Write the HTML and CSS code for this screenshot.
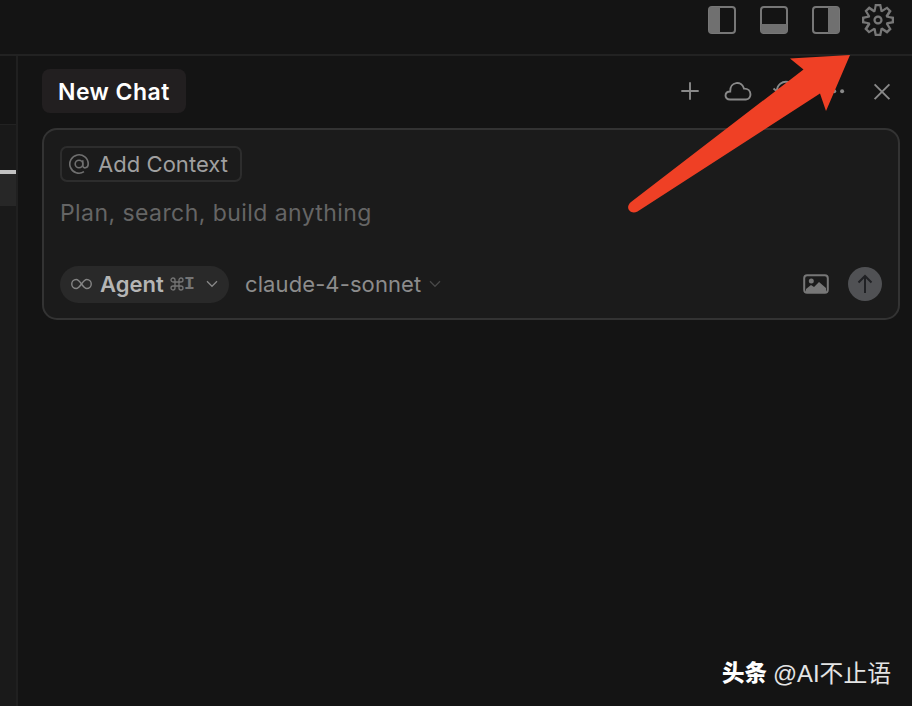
FILE: index.html
```html
<!DOCTYPE html>
<html lang="en">
<head>
<meta charset="utf-8">
<title>New Chat</title>
<link rel="stylesheet" href="styles.css">
</head>
<body>
<div class="app">
  <header class="titlebar">
    <svg class="layout-icon" viewBox="0 0 28 28"><rect x="1" y="1" width="26" height="26" rx="3"/><path class="fill" d="M1 1h11v26H1z"/></svg>
    <svg class="layout-icon" viewBox="0 0 28 28"><rect x="1" y="1" width="26" height="26" rx="3"/><path class="fill" d="M1 18h26v9H1z"/></svg>
    <svg class="layout-icon" viewBox="0 0 28 28"><rect x="1" y="1" width="26" height="26" rx="3"/><path class="fill" d="M16 1h11v26H16z"/></svg>
    <svg class="gear" viewBox="1 1 14 14"><path d="M9.1 4.4L8.6 2H7.4l-.5 2.4-.7.3-2-1.3-.9.8 1.3 2-.2.7-2.4.5v1.2l2.4.5.3.8-1.3 2 .8.8 2-1.3.8.3.4 2.3h1.2l.5-2.4.8-.3 2 1.3.8-.8-1.3-2 .3-.8 2.3-.4V7.4l-2.4-.5-.3-.8 1.3-2-.8-.8-2 1.3-.7-.2zM9.4 1l.5 2.4L12 2.1l2 2-1.4 2.1 2.4.4v2.8l-2.4.5L14 12l-2 2-2.1-1.4-.5 2.4H6.6l-.5-2.4L4 13.9l-2-2 1.4-2.1L1 9.4V6.6l2.4-.5L2.1 4l2-2 2.1 1.4.4-2.4h2.8zm.6 7c0 1.1-.9 2-2 2s-2-.9-2-2 .9-2 2-2 2 .9 2 2zM8 9c.6 0 1-.4 1-1s-.4-1-1-1-1 .4-1 1 .4 1 1 1z"/></svg>
  </header>
  <div class="workspace">
    <aside class="editor-edge">
      <div class="edge-top"></div>
      <div class="edge-mid"></div>
      <div class="edge-line"></div>
      <div class="edge-block"></div>
    </aside>
    <main class="chat">
      <div class="tabs">
        <div class="tab">New Chat</div>
        <div class="actions">
          <svg class="action" viewBox="0 0 28 28"><path d="M14 5.3v17.4M5.3 14h17.4"/></svg>
          <svg class="action" viewBox="0 0 28 28"><path d="M6 22.500C-.2 22.500.2 14.600 6.200 14.500 5.700 4.100 17.900 3.400 20 11.600 28.500 11.400 28 22.500 22 22.500Z"/></svg>
          <svg class="action" viewBox="0 0 28 28"><path d="M5 14a9 9 0 1 1 3 6.500M1.500 11.500L5 14.500l3.500-3M14 9v6h4"/></svg>
          <svg class="action" viewBox="0 0 28 28"><g class="dots"><circle cx="6.300" cy="14.200" r="2"/><circle cx="14.200" cy="14.200" r="2"/><circle cx="22.100" cy="14.200" r="2"/></g></svg>
          <svg class="action" viewBox="0 0 28 28"><path d="M6.600 7.300l14.800 14.800M21.400 7.300L6.600 22.100"/></svg>
        </div>
      </div>
      <section class="composer">
        <div class="context">
          <svg class="at" viewBox="0 0 22 22"><circle cx="11" cy="11" r="3.800"/><path d="M14.800 7.200v5.300c0 3.500 5.400 3.100 5.400-1.500a9.200 9.200 0 1 0-4.200 7.700"/></svg>
          <span>Add Context</span>
        </div>
        <div class="placeholder">Plan, search, build anything</div>
        <div class="controls">
          <div class="mode">
            <svg class="infinity" viewBox="0 0 22 12"><path d="M11 6C8.500 2.500 7.500 1.300 5.500 1.300a4.600 4.600 0 0 0 0 9.400C7.500 10.700 8.500 9.500 11 6s3.500-4.700 5.500-4.700a4.600 4.600 0 0 1 0 9.400C14.500 10.700 13.500 9.500 11 6Z"/></svg>
            <span class="mode-name">Agent</span>
            <span class="keys"><svg class="command" viewBox="0 0 14 14"><path d="M5 5H3a2 2 0 1 1 2-2zM9 5V3a2 2 0 1 1 2 2zM5 9v2a2 2 0 1 1-2-2zM9 9h2a2 2 0 1 1-2 2zM5 5h4v4H5z"/></svg>I</span>
            <svg class="chevron" viewBox="0 0 12 8"><path d="M1 1.300l5 5 5-5"/></svg>
          </div>
          <div class="model">claude-4-sonnet</div>
          <svg class="chevron dim" viewBox="0 0 12 8"><path d="M1 1.300l5 5 5-5"/></svg>
          <svg class="image" viewBox="0 0 26 20"><rect x="1.200" y="1.200" width="23.600" height="17.600" rx="3"/><path d="M3 15l5-4 3 2 5-5 7 6v5H3z"/><circle cx="8.300" cy="7" r="2.500"/></svg>
          <svg class="send" viewBox="0 0 34 34"><circle cx="17" cy="17" r="17"/><path d="M17 26V9M10.500 15.500L17 9l6.500 6.500"/></svg>
        </div>
      </section>
      <footer class="credit"><b>头条</b><span>@AI不止语</span></footer>
    </main>
  </div>
  <svg class="pointer" viewBox="0 0 222 158"><path d="M222 0L162 3.500L175.500 14.500L3 147C-3.500 152.500 2 160 9.500 156.500L192 38.500L198 56Z"/></svg>
</div>
</body>
</html>
```
FILE: styles.css
```css
* { box-sizing: border-box; }
body { margin: 0; background: #141414; }
svg { display: block; flex: none; }
.app {
  position: relative;
  width: 912px;
  height: 706px;
  overflow: hidden;
  display: flex;
  flex-direction: column;
  background: #141414;
  color: #aaa;
  font-family: Inter, "Noto Sans CJK SC", sans-serif;
}
.titlebar {
  height: 56px;
  flex: none;
  display: flex;
  align-items: flex-start;
  justify-content: flex-end;
  padding: 4px 18px 0 0;
  border-bottom: 2px solid #222;
}
.layout-icon { width: 28px; height: 28px; margin: 2px 24px 0 0; fill: none; stroke: #777; stroke-width: 2; }
.layout-icon .fill { fill: #707070; stroke: none; }
.layout-icon:nth-of-type(3) { margin-right: 22px; }
.gear { width: 32px; height: 32px; fill: #777; }
.workspace { flex: 1; display: flex; min-height: 0; }
.editor-edge { width: 18px; flex: none; border-right: 2px solid #202020; background: #1a1a1a; }
.edge-top { height: 68px; background: #141414; }
.edge-mid { height: 46px; background: #191919; border-top: 1px solid #222; }
.edge-line { height: 4px; background: #c3c3c3; }
.edge-block { height: 32px; background: #272727; }
.chat { flex: 1; min-width: 0; display: flex; flex-direction: column; padding: 13px 12px 16px 24px; }
.tabs { height: 44px; flex: none; display: flex; justify-content: space-between; }
.tab {
  width: 144px;
  padding-left: 16px;
  border-radius: 8px;
  background: #221f20;
  color: #fff;
  font-size: 23px;
  font-weight: 600;
  letter-spacing: 0.450px;
  line-height: 46px;
  white-space: nowrap;
}
.actions { display: flex; gap: 20px; padding: 8px 4px 0 0; }
.action { width: 28px; height: 28px; fill: none; stroke: #898989; stroke-width: 1.900; }
.dots { fill: #898989; stroke: none; }
.composer {
  height: 192px;
  flex: none;
  margin-top: 15px;
  padding: 16px 16px 0;
  border: 2px solid #333;
  border-radius: 15px;
  background: #1b1b1b;
}
.context {
  width: 182px;
  height: 36px;
  display: flex;
  align-items: center;
  padding-left: 6px;
  gap: 8px;
  border: 2px solid #2d2d2d;
  border-radius: 7px;
  color: #a0a0a0;
  font-size: 22px;
  letter-spacing: 0.050px;
  white-space: nowrap;
}
.at { width: 22px; height: 22px; fill: none; stroke: #6f6f6f; stroke-width: 1.600; }
.placeholder { margin-top: 16px; height: 30px; line-height: 30px; font-size: 23px; letter-spacing: 0.430px; color: #656565; white-space: nowrap; }
.controls { display: flex; align-items: center; height: 38px; margin-top: 37px; }
.mode { width: 169px; height: 37px; flex: none; display: flex; align-items: center; border-radius: 19px; background: #292929; padding-left: 11px; }
.infinity { width: 21px; height: 12px; fill: none; stroke: #858585; stroke-width: 1.500; }
.mode-name { margin-left: 8px; width: 70px; font-size: 22px; font-weight: 600; color: #b5b5b5; }
.keys { display: flex; align-items: center; width: 36px; font: 700 18px/20px "Liberation Mono", monospace; color: #747474; }
.command { width: 14px; height: 14px; fill: none; stroke: #747474; stroke-width: 1.300; }
.chevron { width: 12px; height: 8px; fill: none; stroke: #888; stroke-width: 1.300; }
.model { margin-left: 16px; width: 184px; font-size: 22px; letter-spacing: 0.100px; color: #8c8c8c; white-space: nowrap; }
.dim { stroke: #484848; }
.image { width: 26px; height: 20px; margin-left: auto; fill: none; stroke: #777; stroke-width: 2; }
.image path, .image circle { fill: #777; stroke: none; }
.send { width: 34px; height: 34px; margin-left: 19px; fill: #505154; }
.send path { fill: none; stroke: #202124; stroke-width: 2; }
.credit { margin-top: auto; display: flex; justify-content: flex-end; gap: 6px; padding-right: 9px; color: #e4e4e4; font: 23.800px/32px "Liberation Sans", "Noto Sans CJK SC", sans-serif; white-space: nowrap; }
.credit b { color: #fff; font-size: 22.500px; font-weight: 900; }
.pointer { position: absolute; left: 628px; top: 55px; width: 222px; height: 158px; overflow: visible; fill: #ef4025; }
```
